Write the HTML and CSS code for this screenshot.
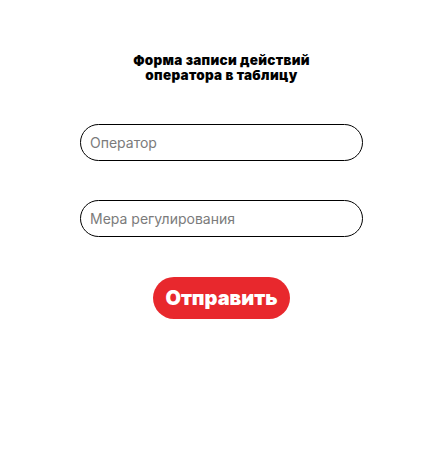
FILE: index.html
```html
<!DOCTYPE html>
<html lang="ru">
<head>
<meta charset="utf-8">
<link rel="stylesheet" href="styles.css">
</head>
<body>
<form class="form">
  <h1 class="title">Форма записи действий<br>оператора в таблицу</h1>
  <input class="field" type="text" placeholder="Оператор">
  <input class="field" type="text" placeholder="Мера регулирования">
  <button class="submit" type="button">Отправить</button>
</form>
</body>
</html>
```
FILE: styles.css
```css
html, body {
  margin: 0;
  padding: 0;
  background: #fff;
}
body {
  font-family: Inter, "Noto Sans", sans-serif;
}
.form {
  display: flex;
  flex-direction: column;
  align-items: center;
  padding-top: 53px;
}
.title {
  margin: 0 0 41px;
  font-size: 13.5px;
  line-height: 15px;
  font-weight: 900;
  letter-spacing: 0.3px;
  text-align: center;
  color: #000;
}
.field {
  box-sizing: border-box;
  width: 283px;
  height: 37px;
  margin: 0 0 39px;
  padding: 0 9px;
  border: 1px solid #000;
  border-radius: 19px;
  font-family: Inter, "Noto Sans", sans-serif;
  font-size: 14px;
  color: #000;
  outline: none;
}
.field::placeholder {
  color: #7b7b7b;
}
.submit {
  width: 137px;
  height: 42px;
  margin-top: 1px;
  padding: 0;
  border: none;
  border-radius: 21px;
  background: #e8282d;
  color: #fff;
  font-family: Inter, "Noto Sans", sans-serif;
  font-size: 20px;
  font-weight: 900;
  cursor: pointer;
}
```
